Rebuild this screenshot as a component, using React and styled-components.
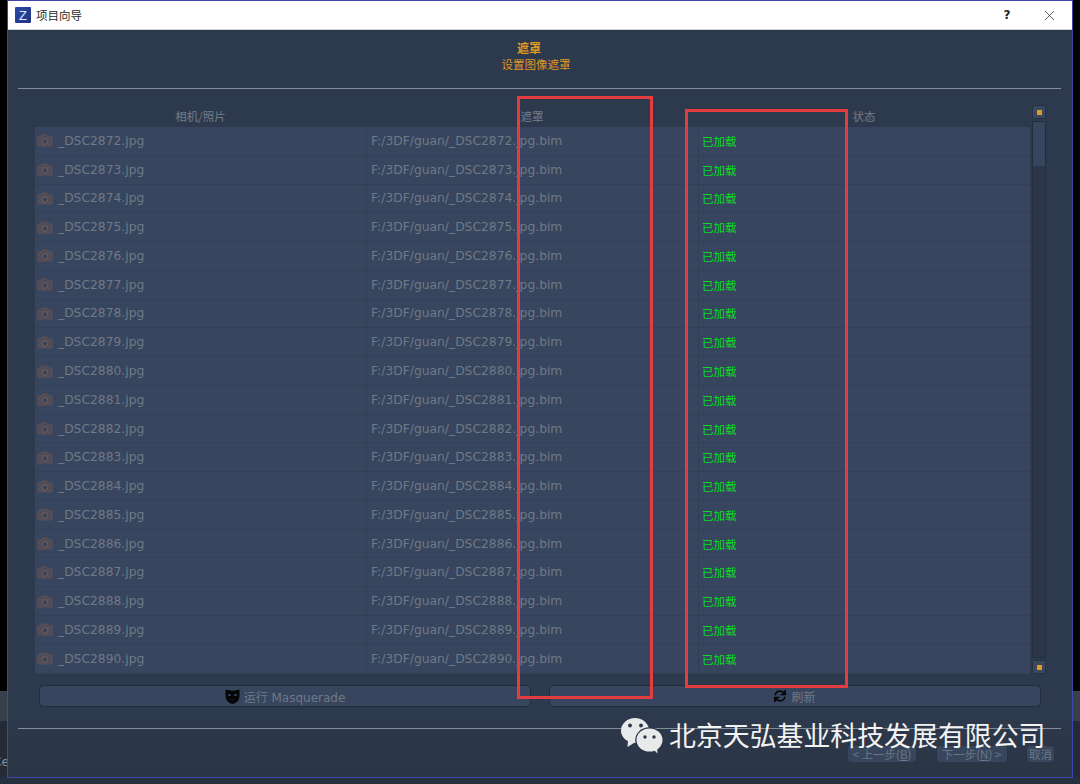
import React from "react";
import styled, { createGlobalStyle } from "styled-components";
import { FaSync } from "react-icons/fa";
import { X } from "lucide-react";

const GlobalStyle = createGlobalStyle`
  html, body {
    margin: 0;
    padding: 0;
    background: #000;
  }
  * {
    box-sizing: border-box;
  }
`;

const FONT = `"DejaVu Sans", "Noto Sans CJK SC", sans-serif`;
const CJK = `"Noto Sans CJK SC", sans-serif`;

const shots = Array.from({ length: 19 }, (_, i) => 2872 + i);

const CameraIcon = () => (
  <svg width="16" height="13" viewBox="0 0 16 13" fill="none">
    <path d="M1 3h3l1-2h5l1 2h4v9H1z" fill="#4d4c58" stroke="#5f5157" strokeWidth="1" />
    <circle cx="8" cy="7.5" r="2.8" fill="#39445a" stroke="#6b585c" strokeWidth="1.2" />
  </svg>
);

const MaskIcon = () => (
  <svg width="15" height="15" viewBox="0 0 14 14">
    <path d="M0.5 0.5Q7 2.6 13.5 0.5L13.5 7Q13.2 12.4 7 14Q0.8 12.4 0.5 7Z" fill="#050608" />
    <ellipse cx="4.2" cy="5.6" rx="1.5" ry="0.9" fill="#37455e" />
    <ellipse cx="9.8" cy="5.6" rx="1.5" ry="0.9" fill="#37455e" />
    <path d="M4.6 9.2Q7 10.8 9.4 9.2Q7 11.6 4.6 9.2Z" fill="#37455e" />
  </svg>
);

const WeChatIcon = () => (
  <svg width="44" height="38" viewBox="0 0 44 38">
    <path d="M8 24.5L7.5 31L14 27Z" fill="#e8e9ea" />
    <ellipse cx="15" cy="14.5" rx="14" ry="12.5" fill="#e8e9ea" />
    <circle cx="10" cy="9.5" r="1.9" fill="#2b3648" />
    <circle cx="21" cy="9.5" r="1.9" fill="#2b3648" />
    <ellipse cx="29.5" cy="24" rx="14.3" ry="12.8" fill="#2b3648" />
    <path d="M33 33L37.5 37.5L37 31Z" fill="#e8e9ea" />
    <ellipse cx="29.5" cy="24" rx="13" ry="11.6" fill="#e8e9ea" />
    <circle cx="25" cy="21" r="1.7" fill="#2b3648" />
    <circle cx="34" cy="21" r="1.7" fill="#2b3648" />
  </svg>
);

export default function App() {
  return (
    <Desktop>
      <GlobalStyle />
      <SideStrip>
        <ClippedText>Ce</ClippedText>
      </SideStrip>
      <Window>
        <TitleBar>
          <AppLogo>Z</AppLogo>
          <WindowTitle>项目向导</WindowTitle>
          <HelpButton>?</HelpButton>
          <CloseButton>
            <X size={17} strokeWidth={1} color="#222" />
          </CloseButton>
        </TitleBar>

        <Body>
          <Heading>
            <HeadingTitle>遮罩</HeadingTitle>
            <HeadingSub>设置图像遮罩</HeadingSub>
          </Heading>
          <Rule />

          <TableArea>
            <Table>
              <HeaderRow>
                <HeaderCell>相机/照片</HeaderCell>
                <HeaderCell>遮罩</HeaderCell>
                <HeaderCell>状态</HeaderCell>
              </HeaderRow>
              {shots.map((n) => (
                <Row key={n}>
                  <NameCell>
                    <CameraIcon />
                    <span>_DSC{n}.jpg</span>
                  </NameCell>
                  <PathCell>F:/3DF/guan/_DSC{n}.jpg.bim</PathCell>
                  <StatusCell>已加载</StatusCell>
                </Row>
              ))}
            </Table>
            <ScrollBar>
              <ScrollButton />
              <ScrollTrack>
                <ScrollThumb />
              </ScrollTrack>
              <ScrollButton />
            </ScrollBar>
          </TableArea>

          <ActionRow>
            <ActionButton $gap={4}>
              <MaskIcon />
              <span>运行 Masquerade</span>
            </ActionButton>
            <ActionButton $gap={5}>
              <FaSync size={12} color="#050608" />
              <span>刷新</span>
            </ActionButton>
          </ActionRow>

          <BottomRule />

          <NavRow>
            <NavButton $width={70}>
              &lt; 上一步(<u>B</u>)
            </NavButton>
            <NavButton $width={72}>
              下一步(<u>N</u>) &gt;
            </NavButton>
            <NavButton $width={29}>取消</NavButton>
          </NavRow>
        </Body>
      </Window>
      <SideStrip />

      <Highlight $left={517} $top={96} $width={136} $height={603} />
      <Highlight $left={685} $top={109} $width={163} $height={579} />

      <Watermark>
        <WeChatIcon />
        <WatermarkText>北京天弘基业科技发展有限公司</WatermarkText>
      </Watermark>
    </Desktop>
  );
}

const Desktop = styled.div`
  position: relative;
  display: flex;
  width: 1080px;
  height: 784px;
  overflow: hidden;
  background: #262f3e;
  font-family: ${FONT};
`;
const SideStrip = styled.div`
  flex: 0 0 7px;
  height: 777px;
  display: flex;
  align-items: flex-end;
  overflow: hidden;
  padding-bottom: 8px;
  background: linear-gradient(
    to bottom,
    #000 0,
    #000 691px,
    #38404c 691px,
    #38404c 721px,
    #232b38 721px
  );
`;
const ClippedText = styled.span`
  margin-left: -7px;
  font-size: 12px;
  color: #8a8f98;
`;
const Window = styled.div`
  flex: 1;
  height: 778px;
  display: flex;
  flex-direction: column;
  border: 1px solid #3d48a8;
  background: #2d394c;
`;
const TitleBar = styled.div`
  height: 29px;
  flex: none;
  display: flex;
  align-items: center;
  padding-left: 7px;
  background: #fff;
  border-bottom: 1px solid #cfd2d8;
`;
const AppLogo = styled.div`
  width: 16px;
  height: 16px;
  display: flex;
  align-items: center;
  justify-content: center;
  margin-right: 5px;
  border-radius: 1px;
  background: linear-gradient(135deg, #2c4aa8, #1f3380);
  color: #dfe8ff;
  font: 13px "Liberation Sans", sans-serif;
`;
const WindowTitle = styled.div`
  flex: 1;
  font: 11.5px ${CJK};
  color: #2a2a2a;
`;
const HelpButton = styled.div`
  width: 14px;
  margin-right: 27px;
  text-align: center;
  font: bold 12px ${FONT};
  color: #222;
`;
const CloseButton = styled.div`
  width: 17px;
  height: 17px;
  margin-right: 14px;
`;
const Body = styled.div`
  flex: 1;
  display: flex;
  flex-direction: column;
  padding: 0 11px 0 10px;
  background: linear-gradient(to bottom, #2d394c 0, #2d394c 92%, #2a3545 100%);
`;
const Heading = styled.div`
  height: 58px;
  flex: none;
  display: flex;
  flex-direction: column;
  align-items: center;
  padding: 10px 7px 0 0;
  color: #df9a25;
  font-family: ${CJK};
  line-height: 16px;
`;
const HeadingTitle = styled.div`
  margin-right: 14px;
  font-size: 12px;
  font-weight: 700;
`;
const HeadingSub = styled.div`
  font-size: 11.5px;
`;
const Rule = styled.div`
  height: 1px;
  flex: none;
  background: #848c98;
`;
const TableArea = styled.div`
  display: flex;
  align-items: flex-start;
  gap: 2px;
  margin: 17px 0 0 17px;
`;
const Table = styled.div`
  width: 995px;
  flex: none;
`;
const HeaderRow = styled.div`
  height: 21px;
  display: grid;
  grid-template-columns: 331px 332px 1fr;
`;
const HeaderCell = styled.div`
  text-align: center;
  font: 11.5px/21px ${CJK};
  color: #747d8b;
`;
const Row = styled.div`
  height: 28.78px;
  display: grid;
  grid-template-columns: 331px 332px 1fr;
  align-items: center;
  background: #37455e;
  border-bottom: 1px solid #323f56;
`;
const NameCell = styled.div`
  display: flex;
  align-items: center;
  gap: 5px;
  padding-left: 2px;
  font-size: 12.3px;
  color: #6f7987;
`;
const PathCell = styled.div`
  height: 100%;
  display: flex;
  align-items: center;
  padding-left: 4px;
  border-left: 1px solid #323f56;
  font-size: 12.3px;
  color: #6f7987;
`;
const StatusCell = styled.div`
  height: 100%;
  display: flex;
  align-items: center;
  padding-left: 3px;
  border-left: 1px solid #323f56;
  font: 11.5px ${CJK};
  color: #08dc24;
`;
const ScrollBar = styled.div`
  flex: none;
  width: 14px;
  display: flex;
  flex-direction: column;
  height: 569px;
  margin-top: -1px;
  gap: 2px;
`;
const ScrollButton = styled.div`
  height: 14px;
  flex: none;
  display: flex;
  align-items: center;
  justify-content: center;
  border-radius: 2px;
  background: #3a485f;
  border: 1px solid #28323f;
  &::after {
    content: "";
    width: 5px;
    height: 5px;
    background: #e09a26;
  }
`;
const ScrollTrack = styled.div`
  flex: 1;
  background: #2b3648;
  border: 1px solid #242d3b;
  border-radius: 2px;
`;
const ScrollThumb = styled.div`
  height: 44px;
  background: #37455e;
`;
const ActionRow = styled.div`
  display: flex;
  gap: 18px;
  margin: 11px 20px 0 21px;
`;
const ActionButton = styled.div`
  flex: 1;
  height: 22px;
  display: flex;
  align-items: center;
  justify-content: center;
  gap: ${(p) => p.$gap}px;
  border: 1px solid #232c3a;
  border-radius: 4px;
  background: #37455e;
  font-size: 12px;
  color: #6f7987;
`;
const BottomRule = styled.div`
  height: 1px;
  flex: none;
  margin-top: 21px;
  background: #848c98;
`;
const NavRow = styled.div`
  display: flex;
  justify-content: flex-end;
  gap: 18.5px;
  margin-top: 16px;
  padding-right: 6px;
`;
const NavButton = styled.div`
  width: ${(p) => p.$width}px;
  height: 18px;
  display: flex;
  align-items: center;
  justify-content: center;
  white-space: nowrap;
  border: 1px solid #2a3442;
  border-radius: 4px;
  background: #38465d;
  font: 11.5px ${CJK};
  color: #6a7688;
`;
const Highlight = styled.div`
  position: absolute;
  left: ${(p) => p.$left}px;
  top: ${(p) => p.$top}px;
  width: ${(p) => p.$width}px;
  height: ${(p) => p.$height}px;
  border: 3px solid #e43c3f;
  pointer-events: none;
`;
const Watermark = styled.div`
  position: absolute;
  left: 620px;
  top: 716px;
  display: flex;
  align-items: center;
  gap: 5px;
`;
const WatermarkText = styled.div`
  font: 26.9px/38px ${CJK};
  white-space: nowrap;
  color: #f3f3f3;
`;
